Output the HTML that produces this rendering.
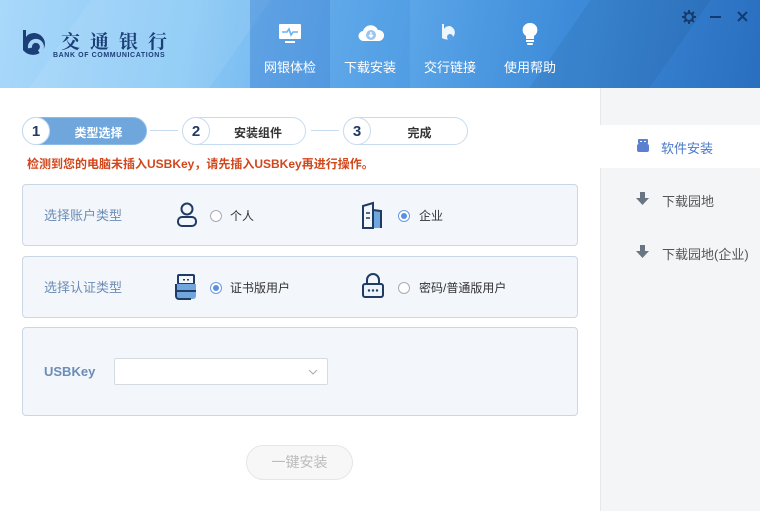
<!DOCTYPE html>
<html><head><meta charset="utf-8"><style>
*{margin:0;padding:0;box-sizing:border-box}
body{width:760px;height:511px;overflow:hidden;background:#fff;font-family:"Liberation Sans","Noto Sans CJK SC",sans-serif;position:relative}
.hd{position:absolute;left:0;top:0;width:760px;height:88px;background:linear-gradient(100deg,#a9d8fa 0%,#8ccaf6 25%,#5fa9ea 50%,#3c8ad8 75%,#2a6fbf 100%);overflow:hidden}
.hd .sh{position:absolute;background:rgba(255,255,255,.08);transform:skewX(-35deg)}
.tab{position:absolute;top:0;width:80px;height:88px;color:#fff;font-size:13px;text-align:center}
.tab span{position:absolute;top:57px;left:0;right:0}
.tab svg{position:absolute;left:28px;top:22px}
.ab{position:absolute;font-size:13px;line-height:1}
.side{position:absolute;left:600px;top:88px;width:160px;height:423px;background:#f4f5f6;border-left:1px solid #e6e8ea}
.si{position:absolute;left:0;width:160px;height:43px;font-size:13px;color:#555}
.si span{position:absolute;left:61px;top:13px}
.pill{position:absolute;top:117px;height:28px;border:1px solid #c8dcef;border-radius:14px;background:#fff;font-size:12px;font-weight:bold;color:#333}
.pill .c{position:absolute;left:-1px;top:-1px;width:28px;height:28px;border:1px solid #c8dcef;border-radius:50%;background:#fff;color:#1f3b66;font-size:15px;text-align:center;line-height:28px}
.pill .t{position:absolute;left:28px;right:0;top:6px;text-align:center}
.ln{position:absolute;top:130px;height:1px;background:#c8dcef}
.box{position:absolute;left:22px;width:556px;background:#f3f6fb;border:1px solid #cad7e5;border-radius:4px}
.lbl{position:absolute;color:#6b8db5;font-size:13px;line-height:1}
.rd{position:absolute;width:12px;height:12px;border:1px solid #aab;border-radius:50%;background:#fff}
.rd.on{border-color:#6a9be0}
.rd.on:after{content:"";position:absolute;left:2px;top:2px;width:6px;height:6px;border-radius:50%;background:#5b8fe0}
.tx{position:absolute;font-size:12px;color:#333;line-height:1}
</style></head><body>
<div class="hd">
 <div class="sh" style="left:60px;top:0;width:180px;height:88px"></div>
 <div class="sh" style="left:560px;top:0;width:120px;height:88px;background:rgba(0,0,0,.05)"></div>
 <div class="tab" style="left:250px;background:rgba(40,110,200,.35)">
  <svg width="24" height="24" viewBox="0 0 24 24"><rect x="1" y="2" width="22" height="15" rx="1" fill="#fff"/><rect x="7" y="19" width="10" height="2" fill="#fff"/><path d="M4 10h5l2-3 2 6 2-3h5" stroke="#6ab3ee" stroke-width="1.6" fill="none"/></svg>
  <span>网银体检</span></div>
 <div class="tab" style="left:330px;background:rgba(60,140,220,.25)">
  <svg width="26" height="24" viewBox="0 0 26 24"><path d="M6 19a5 5 0 0 1-1-10 8 8 0 0 1 15-1 5.5 5.5 0 0 1 1 11z" fill="#fff"/><circle cx="13" cy="13" r="5" fill="#9cc6ee"/><path d="M13 10v5M11 13l2 2 2-2" stroke="#fff" stroke-width="1.4" fill="none"/></svg>
  <span>下载安装</span></div>
 <div class="tab" style="left:410px">
  <svg width="24" height="24" viewBox="0 0 24 24"><path d="M4 2v14a8 7 0 1 0 8-12c-3 0-5 1-6 3V2z" fill="#fff" opacity=".9"/><circle cx="12" cy="15" r="3" fill="#5a9ee3"/></svg>
  <span>交行链接</span></div>
 <div class="tab" style="left:490px">
  <svg width="24" height="24" viewBox="0 0 24 24"><path d="M12 1a7 7 0 0 0-4 13v3h8v-3a7 7 0 0 0-4-13z" fill="#fff"/><rect x="8" y="18" width="8" height="2" fill="#fff"/><rect x="9" y="21" width="6" height="2" rx="1" fill="#fff"/></svg>
  <span>使用帮助</span></div>
 <svg style="position:absolute;left:20px;top:28px" width="30" height="32" viewBox="0 0 30 32"><path d="M3 2v20a12 11 0 1 0 12-17c-4 0-7 1-9 4V2z" fill="#1c3f78"/><path d="M10 20a6 6 0 1 1 9 4" stroke="#a5d4f6" stroke-width="4" fill="none"/></svg>
 <div class="ab" style="left:61px;top:31px;font-size:19px;font-weight:bold;color:#1c3f78;letter-spacing:10px;font-family:'Noto Serif CJK SC',serif">交通银行</div>
 <div class="ab" style="left:53px;top:52px;font-size:7px;font-weight:bold;color:#1c3f78;letter-spacing:.6px">BANK OF COMMUNICATIONS</div>
 <svg style="position:absolute;left:682px;top:10px" width="14" height="14" viewBox="0 0 14 14"><circle cx="7" cy="7" r="4" stroke="#143a6e" stroke-width="2" fill="none"/><path d="M7 0v3M7 11v3M0 7h3M11 7h3M2 2l2 2M10 10l2 2M2 12l2-2M10 4l2-2" stroke="#143a6e" stroke-width="2"/></svg>
 <div class="ab" style="left:710px;top:16px;width:11px;height:2px;background:#143a6e"></div>
 <svg style="position:absolute;left:737px;top:11px" width="11" height="11"><path d="M1 1l9 9M10 1l-9 9" stroke="#143a6e" stroke-width="2"/></svg>
</div>

<div class="side">
 <div class="si" style="top:37px;background:#fff;color:#4a78c8;left:-1px;width:161px"><svg style="position:absolute;left:37px;top:14px" width="12" height="13"><rect x="1" y="0" width="10" height="5" rx="1" fill="#5b80d0"/><rect x="0" y="5" width="12" height="8" rx="2" fill="#5b80d0"/><rect x="3" y="2" width="2" height="1" fill="#fff"/><rect x="7" y="2" width="2" height="1" fill="#fff"/></svg><span>软件安装</span></div>
 <div class="si" style="top:90px"><svg style="position:absolute;left:35px;top:14px" width="13" height="13"><path d="M4 0h5v6h4L6.5 13 0 6h4z" fill="#6a7584"/></svg><span>下载园地</span></div>
 <div class="si" style="top:143px"><svg style="position:absolute;left:35px;top:14px" width="13" height="13"><path d="M4 0h5v6h4L6.5 13 0 6h4z" fill="#6a7584"/></svg><span>下载园地(企业)</span></div>
</div>

<div class="ln" style="left:150px;width:28px"></div>
<div class="ln" style="left:311px;width:28px"></div>
<div class="pill" style="left:22px;width:125px;background:#6fa7dd;border-color:#8dbbe7;color:#fff"><div class="c">1</div><div class="t">类型选择</div></div>
<div class="pill" style="left:182px;width:124px"><div class="c">2</div><div class="t">安装组件</div></div>
<div class="pill" style="left:343px;width:125px"><div class="c">3</div><div class="t">完成</div></div>
<div class="ab" style="left:27px;top:158px;font-size:12px;font-weight:bold;color:#d2461c">检测到您的电脑未插入USBKey，请先插入USBKey再进行操作。</div>

<div class="box" style="top:184px;height:62px">
 <div class="lbl" style="left:21px;top:24px">选择账户类型</div>
 <svg style="position:absolute;left:153px;top:17px" width="22" height="26" viewBox="0 0 22 26"><circle cx="11" cy="7" r="5.5" stroke="#1f3b66" stroke-width="2" fill="none"/><rect x="2" y="15" width="18" height="9" rx="4" stroke="#1f3b66" stroke-width="2" fill="none"/></svg>
 <div class="rd" style="left:187px;top:25px"></div><div class="tx" style="left:207px;top:25px">个人</div>
 <svg style="position:absolute;left:338px;top:16px" width="24" height="28" viewBox="0 0 24 28"><path d="M12 10h9v17h-9z" fill="#6fa7dd"/><path d="M2 5l10-3v25H2z" stroke="#1f3b66" stroke-width="2" fill="none"/><path d="M12 9l8 1v17" stroke="#1f3b66" stroke-width="2" fill="none"/><path d="M5 12h4M5 17h4" stroke="#1f3b66" stroke-width="1.6"/></svg>
 <div class="rd on" style="left:375px;top:25px"></div><div class="tx" style="left:396px;top:25px">企业</div>
</div>

<div class="box" style="top:256px;height:62px">
 <div class="lbl" style="left:21px;top:24px">选择认证类型</div>
 <svg style="position:absolute;left:152px;top:17px" width="22" height="28" viewBox="0 0 22 28"><rect x="3" y="1" width="16" height="9" rx="1" stroke="#1f3b66" stroke-width="2" fill="none"/><rect x="8" y="5" width="2" height="1.5" fill="#1f3b66"/><rect x="12" y="5" width="2" height="1.5" fill="#1f3b66"/><path d="M1 10h20v12a3 3 0 0 1-3 3H4a3 3 0 0 1-3-3z" fill="#6fa7dd"/><path d="M1 10v12a3 3 0 0 0 3 3h12" stroke="#1f3b66" stroke-width="2" fill="none"/><path d="M1 17h20" stroke="#1f3b66" stroke-width="2"/></svg>
 <div class="rd on" style="left:187px;top:25px"></div><div class="tx" style="left:207px;top:25px">证书版用户</div>
 <svg style="position:absolute;left:338px;top:16px" width="24" height="26" viewBox="0 0 24 26"><path d="M6 11V7a6 6 0 0 1 12 0v4" stroke="#1f3b66" stroke-width="2" fill="none"/><rect x="2" y="11" width="20" height="13" rx="2" stroke="#1f3b66" stroke-width="2" fill="#eef3fa"/><circle cx="8" cy="17.5" r="1.2" fill="#1f3b66"/><circle cx="12" cy="17.5" r="1.2" fill="#1f3b66"/><circle cx="16" cy="17.5" r="1.2" fill="#1f3b66"/></svg>
 <div class="rd" style="left:375px;top:25px"></div><div class="tx" style="left:396px;top:25px">密码/普通版用户</div>
</div>

<div class="box" style="top:327px;height:89px">
 <div class="lbl" style="left:21px;top:37px;font-weight:bold">USBKey</div>
 <div style="position:absolute;left:91px;top:30px;width:214px;height:27px;background:#fff;border:1px solid #d4dbe3;border-radius:2px"><svg style="position:absolute;left:193px;top:10px" width="10" height="6"><path d="M1 1l4 4 4-4" stroke="#aaa" fill="none"/></svg></div>
</div>

<div style="position:absolute;left:246px;top:445px;width:107px;height:35px;border:1px solid #e6e6e6;border-radius:18px;background:#f7f7f7;color:#bbb;font-size:14px;text-align:center;line-height:33px">一键安装</div>
</body></html>
